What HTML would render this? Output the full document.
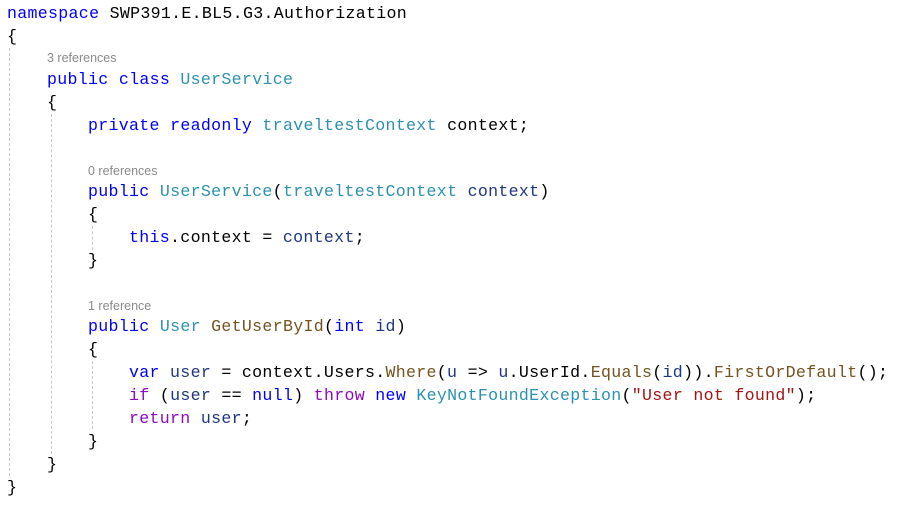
<!DOCTYPE html>
<html><head><meta charset="utf-8"><style>
body{margin:0;width:912px;height:508px;background:#fff;position:relative;overflow:hidden;font-family:"Liberation Mono",monospace;font-size:16.6px;letter-spacing:0.3px;color:#000}
.l{position:absolute;white-space:pre;line-height:22px;height:22px;top:0}
.c{position:absolute;font-family:"Liberation Sans",sans-serif;font-size:12.5px;letter-spacing:0;color:#8a8a8a;line-height:16px}
.k{color:#0000ff}.t{color:#2b91af}.p{color:#8f08c4}.m{color:#74531f}.v{color:#1f377f}.s{color:#a31515}
.g{position:absolute;width:0;border-left:1px dashed #c8c8c8}
</style></head><body>
<div class="g" style="left:9px;top:48px;height:428px"></div>
<div class="g" style="left:51px;top:114px;height:340px"></div>
<div class="g" style="left:92px;top:226px;height:24px"></div>
<div class="g" style="left:92px;top:361px;height:68px"></div>

<div class="l" style="left:7px;top:3px"><span class="k">namespace</span> SWP391.E.BL5.G3.Authorization</div>
<div class="l" style="left:7px;top:26px">{</div>
<div class="c" style="left:47px;top:50px">3 references</div>
<div class="l" style="left:47px;top:69px"><span class="k">public</span> <span class="k">class</span> <span class="t">UserService</span></div>
<div class="l" style="left:47px;top:92px">{</div>
<div class="l" style="left:88px;top:115px"><span class="k">private</span> <span class="k">readonly</span> <span class="t">traveltestContext</span> context;</div>
<div class="c" style="left:88px;top:163px">0 references</div>
<div class="l" style="left:88px;top:181px"><span class="k">public</span> <span class="t">UserService</span>(<span class="t">traveltestContext</span> <span class="v">context</span>)</div>
<div class="l" style="left:88px;top:204px">{</div>
<div class="l" style="left:129px;top:227px"><span class="k">this</span>.context = <span class="v">context</span>;</div>
<div class="l" style="left:88px;top:250px">}</div>
<div class="c" style="left:88px;top:298px">1 reference</div>
<div class="l" style="left:88px;top:316px"><span class="k">public</span> <span class="t">User</span> <span class="m">GetUserById</span>(<span class="k">int</span> <span class="v">id</span>)</div>
<div class="l" style="left:88px;top:339px">{</div>
<div class="l" style="left:129px;top:362px"><span class="k">var</span> <span class="v">user</span> = context.Users.<span class="m">Where</span>(<span class="v">u</span> =&gt; <span class="v">u</span>.UserId.<span class="m">Equals</span>(<span class="v">id</span>)).<span class="m">FirstOrDefault</span>();</div>
<div class="l" style="left:129px;top:385px"><span class="p">if</span> (<span class="v">user</span> == <span class="k">null</span>) <span class="p">throw</span> <span class="k">new</span> <span class="t">KeyNotFoundException</span>(<span class="s">"User not found"</span>);</div>
<div class="l" style="left:129px;top:408px"><span class="p">return</span> <span class="v">user</span>;</div>
<div class="l" style="left:88px;top:431px">}</div>
<div class="l" style="left:47px;top:454px">}</div>
<div class="l" style="left:7px;top:477px">}</div>
</body></html>
